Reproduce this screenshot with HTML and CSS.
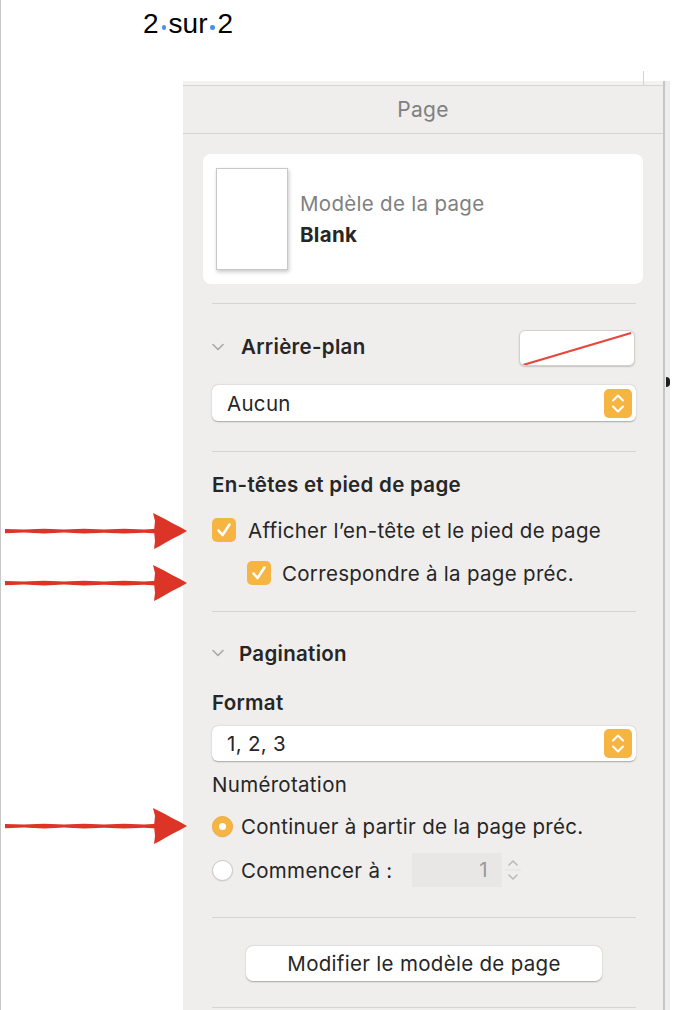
FILE: index.html
```html
<!DOCTYPE html>
<html lang="fr">
<head>
<meta charset="utf-8">
<title>Page</title>
<link rel="stylesheet" href="styles.css">
</head>
<body>
<div class="doc">
  <div class="pagenum">2<span class="ws"></span>sur<span class="ws"></span>2</div>
  <aside class="panel">
    <div class="panel-top"><span class="tick"></span></div>
    <div class="panel-title">Page</div>

    <div class="sec sec-card">
      <div class="card">
        <div class="thumb"></div>
        <div class="card-text">
          <div class="card-label">Modèle de la page</div>
          <div class="card-value">Blank</div>
        </div>
      </div>
    </div>

    <div class="sec sec-bg">
      <div class="row row-between">
        <div class="disclosure">
          <svg class="chev" viewBox="0 0 12 8" width="12" height="8"><path d="M1 1.5 L6 6.5 L11 1.5" fill="none" stroke="#a9a8a6" stroke-width="1.6" stroke-linecap="round" stroke-linejoin="round"/></svg>
          <span class="h">Arrière-plan</span>
        </div>
        <div class="well">
          <svg viewBox="0 0 116 36" width="116" height="36" preserveAspectRatio="none"><line x1="3" y1="34" x2="113" y2="2" stroke="#e9453a" stroke-width="2.2"/></svg>
        </div>
      </div>
      <div class="select select-bg">
        <span>Aucun</span>
        <span class="stepper"><svg viewBox="0 0 28 29" width="28" height="29"><path d="M9 11.5 L14 6.5 L19 11.5 M9 17.5 L14 22.5 L19 17.5" fill="none" stroke="#fff" stroke-width="2" stroke-linecap="round" stroke-linejoin="round"/></svg></span>
      </div>
    </div>

    <div class="sec sec-hf">
      <div class="h title-hf">En-têtes et pied de page</div>
      <label class="check cb1"><span class="box"><svg viewBox="0 0 24 24" width="24" height="24"><path d="M6.5 12.5 L10.5 17 L17.5 6.5" fill="none" stroke="#fff" stroke-width="2.6" stroke-linecap="round" stroke-linejoin="round"/></svg></span><span>Afficher l’en-tête et le pied de page</span></label>
      <label class="check cb2"><span class="box"><svg viewBox="0 0 24 24" width="24" height="24"><path d="M6.5 12.5 L10.5 17 L17.5 6.5" fill="none" stroke="#fff" stroke-width="2.6" stroke-linecap="round" stroke-linejoin="round"/></svg></span><span>Correspondre à la page préc.</span></label>
    </div>

    <div class="sec sec-pag">
      <div class="disclosure">
        <svg class="chev" viewBox="0 0 12 8" width="12" height="8"><path d="M1 1.5 L6 6.5 L11 1.5" fill="none" stroke="#a9a8a6" stroke-width="1.6" stroke-linecap="round" stroke-linejoin="round"/></svg>
        <span class="h">Pagination</span>
      </div>
      <div class="h title-format">Format</div>
      <div class="select select-fmt">
        <span>1, 2, 3</span>
        <span class="stepper"><svg viewBox="0 0 28 29" width="28" height="29"><path d="M9 11.5 L14 6.5 L19 11.5 M9 17.5 L14 22.5 L19 17.5" fill="none" stroke="#fff" stroke-width="2" stroke-linecap="round" stroke-linejoin="round"/></svg></span>
      </div>
      <div class="label-num">Numérotation</div>
      <label class="radio r1"><span class="dot on"></span><span>Continuer à partir de la page préc.</span></label>
      <div class="radio r2">
        <span class="dot"></span><span class="r2-label">Commencer à :</span>
        <span class="numfield">1</span>
        <span class="numstep">
          <svg viewBox="0 0 22 34" width="22" height="34"><path d="M7 12 L11 8 L15 12 M7 22 L11 26 L15 22" fill="none" stroke="#b9b8b6" stroke-width="1.5" stroke-linecap="round" stroke-linejoin="round"/><line x1="3" y1="17" x2="19" y2="17" stroke="#e2e1df" stroke-width="1"/></svg>
        </span>
      </div>
    </div>

    <div class="sec sec-btn">
      <div class="btn">Modifier le modèle de page</div>
    </div>
  </aside>

  <span class="blob"></span>

  <svg class="arrow a1" viewBox="0 0 184 40" width="184" height="40"><path d="M1 18 L20 18.6 L40 17.8 L60 18.5 L80 17.7 L100 18.6 L120 17.8 L140 18.4 L153 17.8 L153 22.4 L140 21.8 L120 22.6 L100 21.7 L80 22.5 L60 21.6 L40 22.4 L20 21.5 L1 22.2 Z" fill="#dc3426"/><path d="M149 2 L155 5 L161 8 L168 12 L176 16 L183 20 L176 24 L168 28 L161 32 L155 35.5 L150 38 L151 30 L150 20 L151 10 Z" fill="#dc3426"/></svg>
  <svg class="arrow a2" viewBox="0 0 184 40" width="184" height="40"><path d="M1 18 L20 18.6 L40 17.8 L60 18.5 L80 17.7 L100 18.6 L120 17.8 L140 18.4 L153 17.8 L153 22.4 L140 21.8 L120 22.6 L100 21.7 L80 22.5 L60 21.6 L40 22.4 L20 21.5 L1 22.2 Z" fill="#dc3426"/><path d="M149 2 L155 5 L161 8 L168 12 L176 16 L183 20 L176 24 L168 28 L161 32 L155 35.5 L150 38 L151 30 L150 20 L151 10 Z" fill="#dc3426"/></svg>
  <svg class="arrow a3" viewBox="0 0 184 40" width="184" height="40"><path d="M1 18 L20 18.6 L40 17.8 L60 18.5 L80 17.7 L100 18.6 L120 17.8 L140 18.4 L153 17.8 L153 22.4 L140 21.8 L120 22.6 L100 21.7 L80 22.5 L60 21.6 L40 22.4 L20 21.5 L1 22.2 Z" fill="#dc3426"/><path d="M149 2 L155 5 L161 8 L168 12 L176 16 L183 20 L176 24 L168 28 L161 32 L155 35.5 L150 38 L151 30 L150 20 L151 10 Z" fill="#dc3426"/></svg>
</div>
</body>
</html>
```
FILE: styles.css
```css
* { box-sizing: border-box; }
html, body { margin: 0; padding: 0; background: #fff; }
body {
  width: 674px;
  height: 1010px;
  overflow: hidden;
  font-family: Inter, "Noto Sans", sans-serif;
  color: #262626;
}
.doc {
  position: relative;
  height: 1010px;
  border-left: 1px solid #c9c9c9;
}
.pagenum {
  font-family: "Liberation Sans", Arial, sans-serif;
  font-size: 28px;
  line-height: 32px;
  height: 81px;
  padding: 8px 0 0 142px;
  color: #000;
  display: flex;
  align-items: flex-start;
}
.ws {
  width: 10px;
  height: 32px;
  position: relative;
  flex: none;
}
.ws::after {
  content: "";
  position: absolute;
  left: 3px;
  top: 17px;
  width: 4.5px;
  height: 4.5px;
  border-radius: 50%;
  background: #4a8fe6;
}

.panel {
  margin-left: 182px;
  width: 482px;
  height: 929px;
  background: #efeeec;
  border-right: 2px solid #c5c5c5;
  box-shadow: 5px 0 0 #ededed;
  font-size: 20.5px;
  letter-spacing: 0.3px;
}
.panel-top {
  height: 4px;
  background: #f4f2f0;
  position: relative;
}
.tick {
  position: absolute;
  left: 460px;
  top: -10px;
  width: 1px;
  height: 14px;
  background: #d4d3d1;
}
.panel-title {
  height: 49px;
  border-top: 1px solid #d6d5d3;
  border-bottom: 1px solid #d6d5d3;
  display: flex;
  align-items: center;
  justify-content: center;
  color: #808080;
  font-size: 21px;
}
.sec {
  margin: 0 27px 0 29px;
  border-bottom: 1px solid #d6d5d3;
  display: flex;
  flex-direction: column;
}
.sec-card {
  margin: 0;
  border: 0;
  padding: 20px 20px 0 20px;
  height: 169px;
}
.card {
  height: 130px;
  background: #fff;
  border-radius: 8px;
  display: flex;
  align-items: flex-start;
  padding: 14px 13px;
}
.thumb {
  width: 72px;
  height: 102px;
  background: #fff;
  border: 1px solid #c9c9c9;
  box-shadow: 1px 2px 4px rgba(0,0,0,0.22);
  flex: none;
}
.card-text {
  margin-left: 12px;
  padding-top: 23px;
  display: flex;
  flex-direction: column;
  gap: 6px;
}
.card-label { color: #808080; line-height: 25px; }
.card-value { font-weight: 700; line-height: 25px; color: #262626; }

.h { font-weight: 600; color: #262626; }
.row { display: flex; align-items: center; }
.row-between { justify-content: space-between; }
.disclosure { display: flex; align-items: center; height: 24px; }
.chev { margin-right: 17px; flex: none; }

.sec-bg { height: 149px; border-top: 1px solid #d6d5d3; }
.sec-bg .row { margin-top: 26px; height: 36px; }
.sec-bg .disclosure { margin-top: -3px; }
.well {
  width: 116px;
  height: 36px;
  background: #fff;
  border-radius: 6px;
  border: 1px solid #d2d1cf;
  box-shadow: 0 1px 1.5px rgba(0,0,0,0.18);
  overflow: hidden;
  display: flex;
  margin-right: 1px;
}
.well svg { display: block; }

.select {
  height: 36px;
  background: #fff;
  border-radius: 6px;
  box-shadow: 0 0.5px 1.5px rgba(0,0,0,0.3);
  display: flex;
  align-items: center;
  justify-content: space-between;
  padding: 0 4px 0 15px;
}
.select-bg { margin-top: 19px; }
.stepper {
  width: 28px;
  height: 29px;
  background: #f6b443;
  border-radius: 5px;
  display: flex;
}

.sec-hf { height: 160px; }
.title-hf { margin-top: 21px; line-height: 24px; }
.check { display: flex; align-items: center; height: 24px; }
.box {
  width: 24px;
  height: 24px;
  border-radius: 5px;
  background: #f6b443;
  display: flex;
  flex: none;
  margin-right: 12px;
}
.cb1 { margin-top: 21px; }
.cb2 { margin-top: 19px; margin-left: 35px; margin-right: -1px; }
.cb2 .box { margin-right: 11px; }

.sec-pag { height: 306px; }
.sec-pag .disclosure { margin-top: 29px; }
.sec-pag .disclosure .chev { margin-right: 15px; }
.title-format { margin-top: 26px; line-height: 24px; }
.select-fmt { margin-top: 11px; height: 35px; }
.label-num { margin-top: 12px; line-height: 24px; }
.radio { display: flex; align-items: center; }
.r1 { margin-top: 17px; height: 24px; }
.r2 { margin-top: 15px; height: 34px; }
.dot {
  width: 21px;
  height: 21px;
  border-radius: 50%;
  background: #fff;
  border: 1px solid #c9c8c6;
  box-shadow: 0 0.5px 1px rgba(0,0,0,0.1);
  margin-right: 8px;
  flex: none;
  display: flex;
  align-items: center;
  justify-content: center;
}
.dot.on { background: #f6b443; border-color: #f0ad3c; }
.dot.on::after {
  content: "";
  width: 7px;
  height: 7px;
  border-radius: 50%;
  background: #fff;
}
.r2-label { width: 171px; }
.numfield {
  width: 90px;
  height: 34px;
  background: #e8e7e5;
  color: #9b9a98;
  text-align: right;
  line-height: 34px;
  padding-right: 14px;
}
.numstep {
  width: 22px;
  height: 34px;
  display: flex;
}

.sec-btn { height: 90px; align-items: center; }
.btn {
  margin-top: 28px;
  width: 356px;
  height: 35px;
  background: #fff;
  border-radius: 7px;
  box-shadow: 0 0.5px 1.5px rgba(0,0,0,0.3);
  display: flex;
  align-items: center;
  justify-content: center;
}

.blob {
  position: absolute;
  left: 665px;
  top: 377px;
  width: 4px;
  height: 10px;
  border-radius: 0 4px 4px 0;
  background: #1e1e1e;
}

.arrow { position: absolute; left: 3px; }
.a1 { top: 511px; }
.a2 { top: 563px; }
.a3 { top: 806px; }
```
